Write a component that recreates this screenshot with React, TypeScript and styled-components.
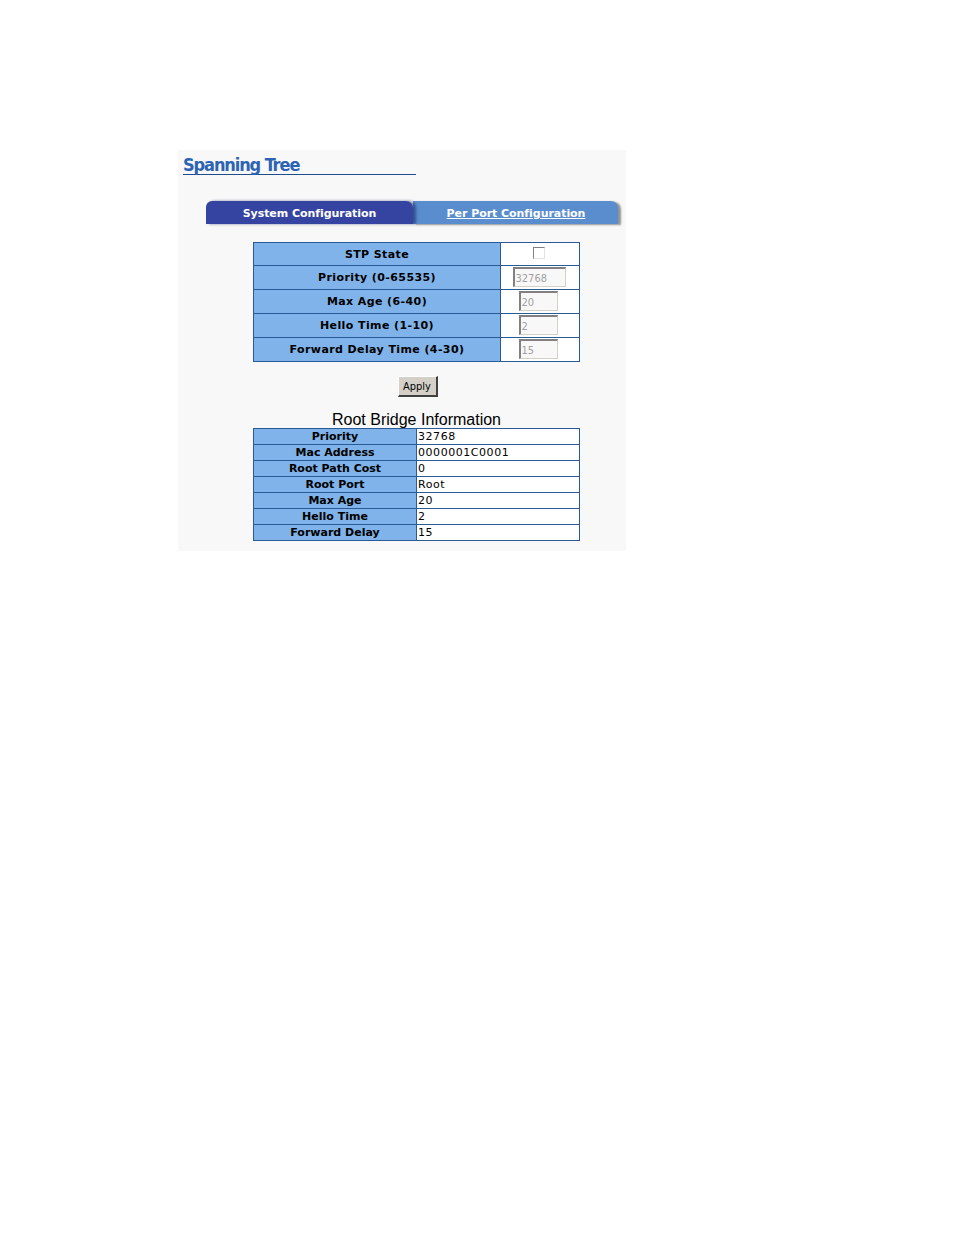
import React from "react"
import styled, { createGlobalStyle } from "styled-components"

const GlobalStyle = createGlobalStyle`
  body {
    margin: 0;
    background: #ffffff;
    font-family: "DejaVu Sans", Verdana, sans-serif;
  }
`

const colors = {
  panel: "#f8f8f8",
  title: "#2c63b4",
  rule: "#1f4c8c",
  tabActive: "#3544a1",
  tabIdle: "#5a8dcd",
  cellBlue: "#7fb3e9",
  border: "#2b5b97",
}

const Panel = styled.div`
  margin: 150px 0 0 178px;
  width: 448px;
  height: 401px;
  background: ${colors.panel};
  padding: 5px 0 0 5px;
  box-sizing: border-box;
`

const Title = styled.h1`
  margin: 0;
  width: 233px;
  font-family: "DejaVu Sans Condensed", "DejaVu Sans", sans-serif;
  font-weight: bold;
  font-size: 18px;
  line-height: 19px;
  letter-spacing: -1.1px;
  color: ${colors.title};
  border-bottom: 1px solid ${colors.rule};
`

const Tabs = styled.div`
  display: flex;
  margin: 26px 0 0 23px;
  height: 23px;
`

const Tab = styled.div<{ $active?: boolean }>`
  position: relative;
  width: ${(p) => (p.$active ? "207px" : "205px")};
  height: 23px;
  display: flex;
  align-items: center;
  justify-content: center;
  font-size: 11px;
  font-weight: bold;
  letter-spacing: -0.05px;
  color: #ffffff;
  background: ${(p) => (p.$active ? colors.tabActive : colors.tabIdle)};
  border-radius: ${(p) => (p.$active ? "6px 7px 0 0" : "0 7px 0 0")};
  box-shadow: ${(p) =>
    p.$active ? "3px 0 3px rgba(20, 30, 90, 0.55)" : "3px 1px 2px rgba(80, 80, 80, 0.6)"};
  z-index: ${(p) => (p.$active ? 2 : 1)};
  padding-top: 1px;
  box-sizing: border-box;
`

const TabLink = styled.a`
  color: #ffffff;
  text-decoration: underline;
  margin-left: 1px;
`

const FormTable = styled.table`
  border-collapse: collapse;
  margin: 18px 0 0 70px;
  width: 327px;
`

const Row = styled.tr<{ $h: number }>`
  height: ${(p) => p.$h}px;
`

const Label = styled.td`
  background: ${colors.cellBlue};
  border: 1px solid ${colors.border};
  text-align: center;
  font-size: 11px;
  font-weight: bold;
  letter-spacing: 0.4px;
  color: #000000;
  padding: 0;
`

const Value = styled.td`
  border: 1px solid ${colors.border};
  background: #ffffff;
  text-align: center;
  padding: 0;
  width: 78px;
`

const Check = styled.span`
  display: inline-block;
  width: 10px;
  height: 10px;
  border-top: 1px solid #808080;
  border-left: 1px solid #808080;
  border-right: 1px solid #e0e0e0;
  border-bottom: 1px solid #e0e0e0;
  background: #ffffff;
  vertical-align: top;
  margin: 2px 0 0 -2px;
`

const Field = styled.input<{ $w: number }>`
  width: ${(p) => p.$w}px;
  height: 20px;
  box-sizing: border-box;
  border-top: 2px solid #808080;
  border-left: 2px solid #808080;
  border-right: 1px solid #d4d0c8;
  border-bottom: 1px solid #d4d0c8;
  background: #f8f8f8;
  font-family: "DejaVu Sans Condensed", "DejaVu Sans", sans-serif;
  font-size: 11px;
  color: #a0a0a0;
  padding: 1px 0 0 1px;
  vertical-align: middle;
  margin: -3px 0 0 ${(p) => (p.$w > 50 ? "-2px" : "-4px")};
`

const ButtonRow = styled.div`
  display: flex;
  justify-content: center;
  width: 327px;
  margin: 14px 0 0 70px;
  padding-left: 1px;
`

const Apply = styled.button`
  width: 40px;
  height: 21px;
  padding: 0;
  background: #d4d0c8;
  border-top: 1px solid #ffffff;
  border-left: 1px solid #ffffff;
  border-right: 2px solid #404040;
  border-bottom: 2px solid #404040;
  font-family: "DejaVu Sans Condensed", "DejaVu Sans", sans-serif;
  font-size: 11px;
  color: #000000;
`

const InfoHeading = styled.div`
  width: 327px;
  margin: 15px 0 0 70px;
  text-align: center;
  font-family: "Liberation Sans", Arial, sans-serif;
  font-size: 16px;
  line-height: 16px;
  color: #000000;
`

const InfoTable = styled.table`
  border-collapse: collapse;
  margin: 0 0 0 70px;
  width: 327px;
`

const InfoLabel = styled(Label)`
  width: 162px;
  font-size: 11px;
  line-height: 14px;
  letter-spacing: 0;
`

const InfoValue = styled.td`
  border: 1px solid ${colors.border};
  background: #ffffff;
  padding: 0 0 0 1px;
  font-size: 11px;
  line-height: 14px;
  letter-spacing: 0.55px;
  color: #000000;
`

const formRows = [
  { label: "Priority (0-65535)", value: "32768", w: 53 },
  { label: "Max Age (6-40)", value: "20", w: 39 },
  { label: "Hello Time (1-10)", value: "2", w: 39 },
  { label: "Forward Delay Time (4-30)", value: "15", w: 39 },
]

const infoRows = [
  ["Priority", "32768"],
  ["Mac Address", "0000001C0001"],
  ["Root Path Cost", "0"],
  ["Root Port", "Root"],
  ["Max Age", "20"],
  ["Hello Time", "2"],
  ["Forward Delay", "15"],
]

const App = () => {
  return (
    <>
      <GlobalStyle />
      <Panel>
        <Title>Spanning Tree</Title>
        <Tabs>
          <Tab $active>System Configuration</Tab>
          <Tab>
            <TabLink href="#">Per Port Configuration</TabLink>
          </Tab>
        </Tabs>
        <FormTable>
          <tbody>
            <Row $h={23}>
              <Label>STP State</Label>
              <Value>
                <Check />
              </Value>
            </Row>
            {formRows.map((r) => (
              <Row key={r.label} $h={24}>
                <Label>{r.label}</Label>
                <Value>
                  <Field $w={r.w} value={r.value} disabled readOnly />
                </Value>
              </Row>
            ))}
          </tbody>
        </FormTable>
        <ButtonRow>
          <Apply>Apply</Apply>
        </ButtonRow>
        <InfoHeading>Root Bridge Information</InfoHeading>
        <InfoTable>
          <tbody>
            {infoRows.map(([label, value]) => (
              <Row key={label} $h={16}>
                <InfoLabel>{label}</InfoLabel>
                <InfoValue>{value}</InfoValue>
              </Row>
            ))}
          </tbody>
        </InfoTable>
      </Panel>
    </>
  )
}

export default App
